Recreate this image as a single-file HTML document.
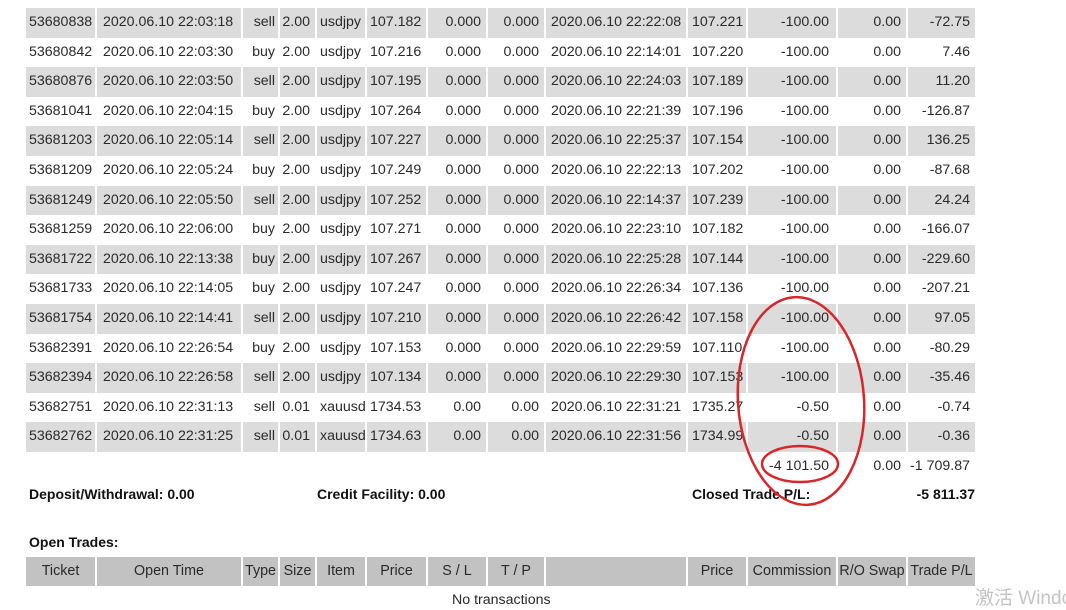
<!DOCTYPE html>
<html><head><meta charset="utf-8"><style>
body{margin:0;width:1066px;height:600px;overflow:hidden;background:#fff;font-family:"Liberation Sans",Arial,sans-serif;font-size:14.2px;color:#2a2a2a;position:relative}
.row{position:absolute;left:26px;width:951px;height:29.6px}
.g{background:#dcdcdc}
.c{position:absolute;top:0;height:100%;line-height:29px;white-space:nowrap;border-right:2px solid #fff;box-sizing:border-box;overflow:hidden}
.l{text-align:left;padding-left:3px}.r{text-align:right;padding-right:5px}
.h{background:#c2c2c2;height:29px;top:557px}
.h .c{text-align:center;padding:0}
.b{position:absolute;font-weight:bold;font-size:14px;color:#111}
</style></head><body>
<div id="rows"></div>
<script>
var cols=[26,97,243,280,317,367,428,488,546,688,748,838,908,977];
var al=['l','l','r','r','l','l','r','r','l','l','r','r','r'];
var d=[
["53680838","2020.06.10 22:03:18","sell","2.00","usdjpy","107.182","0.000","0.000","2020.06.10 22:22:08","107.221","-100.00","0.00","-72.75"],
["53680842","2020.06.10 22:03:30","buy","2.00","usdjpy","107.216","0.000","0.000","2020.06.10 22:14:01","107.220","-100.00","0.00","7.46"],
["53680876","2020.06.10 22:03:50","sell","2.00","usdjpy","107.195","0.000","0.000","2020.06.10 22:24:03","107.189","-100.00","0.00","11.20"],
["53681041","2020.06.10 22:04:15","buy","2.00","usdjpy","107.264","0.000","0.000","2020.06.10 22:21:39","107.196","-100.00","0.00","-126.87"],
["53681203","2020.06.10 22:05:14","sell","2.00","usdjpy","107.227","0.000","0.000","2020.06.10 22:25:37","107.154","-100.00","0.00","136.25"],
["53681209","2020.06.10 22:05:24","buy","2.00","usdjpy","107.249","0.000","0.000","2020.06.10 22:22:13","107.202","-100.00","0.00","-87.68"],
["53681249","2020.06.10 22:05:50","sell","2.00","usdjpy","107.252","0.000","0.000","2020.06.10 22:14:37","107.239","-100.00","0.00","24.24"],
["53681259","2020.06.10 22:06:00","buy","2.00","usdjpy","107.271","0.000","0.000","2020.06.10 22:23:10","107.182","-100.00","0.00","-166.07"],
["53681722","2020.06.10 22:13:38","buy","2.00","usdjpy","107.267","0.000","0.000","2020.06.10 22:25:28","107.144","-100.00","0.00","-229.60"],
["53681733","2020.06.10 22:14:05","buy","2.00","usdjpy","107.247","0.000","0.000","2020.06.10 22:26:34","107.136","-100.00","0.00","-207.21"],
["53681754","2020.06.10 22:14:41","sell","2.00","usdjpy","107.210","0.000","0.000","2020.06.10 22:26:42","107.158","-100.00","0.00","97.05"],
["53682391","2020.06.10 22:26:54","buy","2.00","usdjpy","107.153","0.000","0.000","2020.06.10 22:29:59","107.110","-100.00","0.00","-80.29"],
["53682394","2020.06.10 22:26:58","sell","2.00","usdjpy","107.134","0.000","0.000","2020.06.10 22:29:30","107.153","-100.00","0.00","-35.46"],
["53682751","2020.06.10 22:31:13","sell","0.01","xauusd","1734.53","0.00","0.00","2020.06.10 22:31:21","1735.27","-0.50","0.00","-0.74"],
["53682762","2020.06.10 22:31:25","sell","0.01","xauusd","1734.63","0.00","0.00","2020.06.10 22:31:56","1734.99","-0.50","0.00","-0.36"],
["","","","","","","","","","","-4 101.50","0.00","-1 709.87"]];
var pads={1:'padding-left:6px',2:'padding-right:3px',8:'padding-left:5px',9:'padding-left:4px',10:'padding-right:7px'};
var h='';
function mk(r,cls,top,hdr){var s='<div class="row '+cls+'" style="top:'+top+'px">';
for(var i=0;i<13;i++){s+='<div class="c '+(hdr?'':al[i])+'" style="left:'+(cols[i]-26)+'px;width:'+(cols[i+1]-cols[i])+'px;'+(hdr?'font-size:14.3px':(pads[i]||''))+'">'+r[i]+'</div>';}
return s+'</div>';}
for(var k=0;k<d.length;k++){h+=mk(d[k],(k%2==0&&k<15)?'g':'',8+k*29.6,false);}
h+=mk(["Ticket","Open Time","Type","Size","Item","Price","S / L","T / P","","Price","Commission","R/O Swap","Trade P/L"],'h',557,true);
document.getElementById('rows').innerHTML=h;
</script>
<div class="b" style="left:29px;top:486px">Deposit/Withdrawal: 0.00</div>
<div class="b" style="left:317px;top:486px">Credit Facility: 0.00</div>
<div class="b" style="left:692px;top:486px">Closed Trade P/L:</div>
<div class="b" style="right:91px;top:486px">-5 811.37</div>
<div class="b" style="left:29px;top:534px">Open Trades:</div>
<div style="position:absolute;left:452px;top:592px">No transactions</div>
<div style="position:absolute;left:975px;top:583px;font-size:19px;white-space:nowrap;color:#c4c4c4;font-family:'Liberation Sans','Noto Sans CJK SC',sans-serif">激活 Windc</div>
<svg style="position:absolute;left:0;top:0" width="1066" height="600">
<ellipse cx="801" cy="401" rx="63" ry="104" fill="none" stroke="#d8262a" stroke-width="2.5" transform="rotate(-4 801 401)"/>
<ellipse cx="800" cy="464" rx="38" ry="18" fill="none" stroke="#d8262a" stroke-width="2.5"/>
</svg>
</body></html>
